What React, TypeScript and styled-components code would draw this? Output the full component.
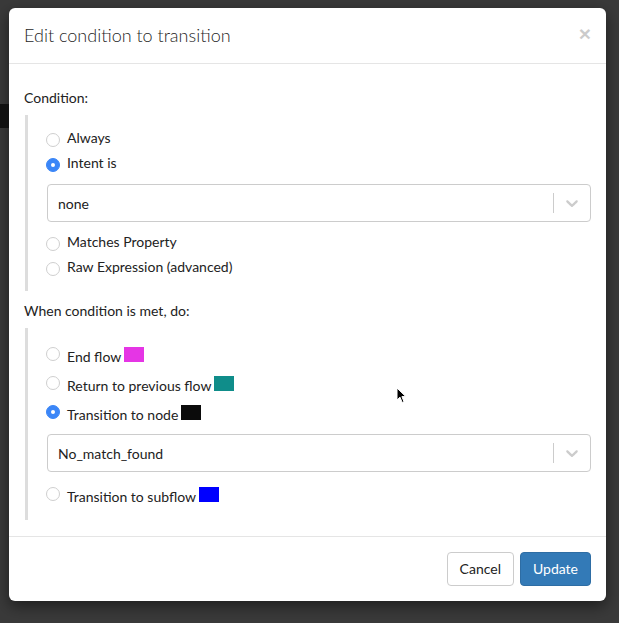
import React from 'react';
import styled, { createGlobalStyle } from 'styled-components';

const GlobalStyle = createGlobalStyle`
  html, body {
    margin: 0;
    padding: 0;
    background: #3a3a3a;
  }
  * {
    box-sizing: border-box;
  }
`;

interface RadioOption {
  label: string;
  checked?: boolean;
  swatch?: string;
}

const Page = styled.div`
  position: relative;
  width: 619px;
  height: 623px;
  padding: 8px 0 0 9px;
  background: #3a3a3a;
  font-family: Lato, 'Noto Sans', sans-serif;
  color: #333;
  overflow: hidden;
`;

const BehindBlock = styled.div`
  position: absolute;
  left: 0;
  top: 104px;
  width: 9px;
  height: 24px;
  background: #111;
`;

const Modal = styled.div`
  width: 597px;
  background: #fff;
  border-radius: 6px;
  box-shadow: 0 5px 15px rgba(0, 0, 0, 0.5);
`;

const Header = styled.div`
  display: flex;
  align-items: center;
  justify-content: space-between;
  padding: 15px 15px;
  border-bottom: 1px solid #e5e5e5;
`;

const Title = styled.h4`
  margin: 0;
  font-size: 18px;
  line-height: 25px;
  font-weight: 300;
  color: #1f1f1f;
`;

const Close = styled.button`
  border: none;
  background: none;
  padding: 0;
  margin-top: -5px;
  font-family: 'Liberation Sans', Arial, sans-serif;
  font-size: 21px;
  font-weight: 700;
  line-height: 1;
  color: #000;
  opacity: 0.2;
  cursor: pointer;
`;

const Body = styled.div`
  padding: 24px 15px 16px;
`;

const SectionLabel = styled.div<{ $top?: number }>`
  font-size: 14px;
  line-height: 20px;
  margin-top: ${(p) => p.$top ?? 0}px;
  margin-bottom: 7px;
  color: #222;
`;

const Quote = styled.div<{ $padTop: number; $padBottom: number; $gap: number }>`
  display: flex;
  flex-direction: column;
  gap: ${(p) => p.$gap}px;
  margin-left: 1px;
  border-left: 3px solid #ddd;
  padding: ${(p) => p.$padTop}px 0 ${(p) => p.$padBottom}px 19px;
`;

const Row = styled.label<{ $radioTop: number }>`
  display: flex;
  align-items: flex-start;
  height: 20px;
  font-size: 14px;
  line-height: 20px;
  color: #222;
  cursor: pointer;

  & > span:first-child {
    margin-top: ${(p) => p.$radioTop}px;
  }
`;

const RadioDot = styled.span<{ $checked?: boolean }>`
  flex: none;
  position: relative;
  width: 14px;
  height: 14px;
  margin-left: -1px;
  margin-right: 7px;
  border-radius: 50%;
  border: 1px solid ${(p) => (p.$checked ? '#3b86f7' : '#cfcfcf')};
  background: ${(p) => (p.$checked ? '#3b86f7' : '#fff')};

  &::after {
    content: '';
    display: ${(p) => (p.$checked ? 'block' : 'none')};
    position: absolute;
    left: 50%;
    top: 50%;
    width: 4px;
    height: 4px;
    margin: -2px 0 0 -2px;
    border-radius: 50%;
    background: #fff;
  }
`;

const Swatch = styled.span<{ $color: string }>`
  display: inline-block;
  width: 20px;
  height: 15px;
  margin-left: 3px;
  background: ${(p) => p.$color};
`;

const SelectBox = styled.div<{ $top: number; $bottom: number }>`
  display: flex;
  align-items: center;
  height: 38px;
  margin: ${(p) => p.$top}px 0 ${(p) => p.$bottom}px;
  border: 1px solid #ccc;
  border-radius: 4px;
  background: #fff;
`;

const SelectValue = styled.div`
  flex: 1;
  padding-left: 10px;
  font-size: 14px;
  color: #222;
`;

const Separator = styled.span`
  width: 1px;
  height: 20px;
  background: #ccc;
`;

const Indicator = styled.div`
  display: flex;
  padding: 8px;
  color: #ccc;
`;

const Footer = styled.div`
  display: flex;
  justify-content: flex-end;
  gap: 6px;
  padding: 15px;
  border-top: 1px solid #e5e5e5;
`;

const Button = styled.button<{ $primary?: boolean }>`
  height: 34px;
  padding: 6px 12px;
  font-family: Lato, 'Noto Sans', sans-serif;
  font-size: 14px;
  line-height: 20px;
  border-radius: 4px;
  border: 1px solid ${(p) => (p.$primary ? '#2e6da4' : '#ccc')};
  background: ${(p) => (p.$primary ? '#337ab7' : '#fff')};
  color: ${(p) => (p.$primary ? '#fff' : '#222')};
  cursor: pointer;
`;

const Cursor = styled.svg`
  position: absolute;
  left: 396px;
  top: 387px;
`;

const Chevron = () => (
  <svg width="20" height="20" viewBox="0 0 20 20" fill="currentColor">
    <path d="M4.516 7.548c0.436-0.446 1.043-0.481 1.576 0l3.908 3.747 3.908-3.747c0.533-0.481 1.141-0.446 1.574 0 0.436 0.445 0.408 1.197 0 1.615-0.406 0.418-4.695 4.502-4.695 4.502-0.217 0.223-0.502 0.335-0.787 0.335s-0.57-0.112-0.789-0.335c0 0-4.287-4.084-4.695-4.502s-0.436-1.17 0-1.615z" />
  </svg>
);

const Select: React.FC<{ value: string; top: number; bottom: number }> = ({ value, top, bottom }) => (
  <SelectBox $top={top} $bottom={bottom}>
    <SelectValue>{value}</SelectValue>
    <Separator />
    <Indicator>
      <Chevron />
    </Indicator>
  </SelectBox>
);

const Option: React.FC<RadioOption & { radioTop: number }> = ({ label, checked, swatch, radioTop }) => (
  <Row $radioTop={radioTop}>
    <RadioDot $checked={checked} />
    {label}
    {swatch && <Swatch $color={swatch} />}
  </Row>
);

export default function App() {
  return (
    <>
      <GlobalStyle />
      <Page>
        <BehindBlock />
        <Modal>
          <Header>
            <Title>Edit condition to transition</Title>
            <Close aria-label="Close">×</Close>
          </Header>
          <Body>
            <SectionLabel>Condition:</SectionLabel>
            <Quote $padTop={13} $padBottom={14} $gap={5}>
              <Option radioTop={5} label="Always" />
              <Option radioTop={5} label="Intent is" checked />
              <Select value="none" top={6} bottom={5} />
              <Option radioTop={5} label="Matches Property" />
              <Option radioTop={5} label="Raw Expression (advanced)" />
            </Quote>
            <SectionLabel $top={10}>When condition is met, do:</SectionLabel>
            <Quote $padTop={19} $padBottom={13} $gap={9}>
              <Option radioTop={0} label="End flow" swatch="#e535e5" />
              <Option radioTop={0} label="Return to previous flow" swatch="#0f8d8a" />
              <Option radioTop={0} label="Transition to node" checked swatch="#0b0b0b" />
              <Select value="No_match_found" top={0} bottom={6} />
              <Option radioTop={0} label="Transition to subflow" swatch="#0000ff" />
            </Quote>
          </Body>
          <Footer>
            <Button>Cancel</Button>
            <Button $primary>Update</Button>
          </Footer>
        </Modal>
        <Cursor width="11" height="17" viewBox="0 0 11 17">
          <path d="M1 1 L1 13 L4 10.2 L6.2 15.5 L8 14.7 L5.9 9.6 L9.8 9.6 Z" fill="#000" stroke="#fff" strokeWidth="1" />
        </Cursor>
      </Page>
    </>
  );
}
